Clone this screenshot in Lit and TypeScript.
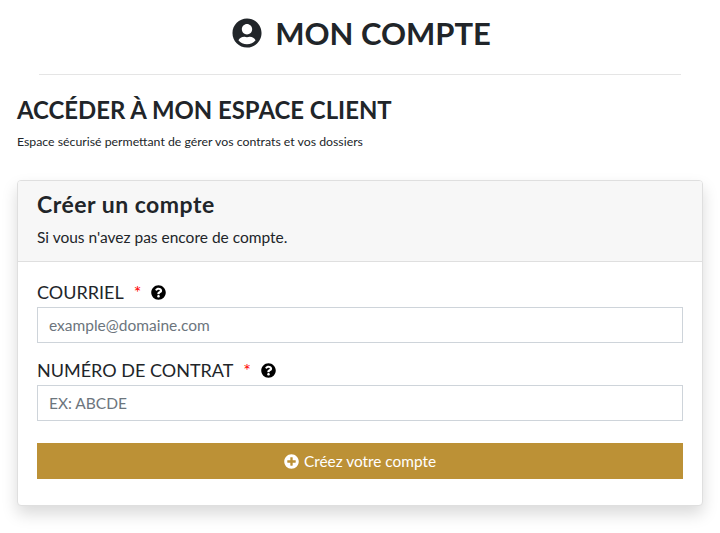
import { html, css, LitElement, svg } from 'lit';
import { customElement } from 'lit/decorators.js';

const userCircle = svg`<path d="M248 8C111 8 0 119 0 256s111 248 248 248 248-111 248-248S385 8 248 8zm0 96c48.6 0 88 39.4 88 88s-39.4 88-88 88-88-39.4-88-88 39.4-88 88-88zm0 344c-58.7 0-111.3-26.6-146.5-68.2 18.8-35.4 55.6-59.8 98.5-59.8 2.4 0 4.8.4 7.1 1.1 13 4.2 26.6 6.9 40.9 6.9 14.3 0 28-2.7 40.9-6.9 2.3-.7 4.7-1.1 7.1-1.1 42.9 0 79.7 24.4 98.5 59.8C359.3 421.4 306.7 448 248 448z"/>`;
const questionCircle = svg`<path d="M504 256c0 136.997-111.043 248-248 248S8 392.997 8 256C8 119.083 119.043 8 256 8s248 111.083 248 248zM262.655 90c-54.497 0-89.255 22.957-116.549 63.758-3.536 5.286-2.353 12.415 2.715 16.258l34.699 26.31c5.205 3.947 12.621 3.008 16.665-2.122 17.864-22.658 30.113-35.797 57.303-35.797 20.429 0 45.698 13.148 45.698 32.958 0 14.976-12.363 22.667-32.534 33.976C247.128 238.528 216 254.941 216 296v4c0 6.627 5.373 12 12 12h56c6.627 0 12-5.373 12-12v-1.333c0-28.462 83.186-29.647 83.186-106.667 0-58.002-60.165-102-116.531-102zM256 338c-25.365 0-46 20.635-46 46 0 25.364 20.635 46 46 46s46-20.636 46-46c0-25.365-20.635-46-46-46z"/>`;
const plusCircle = svg`<path d="M256 8C119 8 8 119 8 256s111 248 248 248 248-111 248-248S393 8 256 8zm144 276c0 6.6-5.4 12-12 12h-92v92c0 6.6-5.4 12-12 12h-56c-6.6 0-12-5.4-12-12v-92h-92c-6.6 0-12-5.4-12-12v-56c0-6.6 5.4-12 12-12h92v-92c0-6.6 5.4-12 12-12h56c6.6 0 12 5.4 12 12v92h92c6.6 0 12 5.4 12 12v56z"/>`;

@customElement('app-root')
export class AppRoot extends LitElement {
  static styles = css`
    :host {
      display: block;
      background: #fff;
      color: #212529;
      font-family: Lato, 'Noto Sans', sans-serif;
      height: 533px;
      overflow: hidden;
    }

    .page {
      padding: 0 17px;
    }

    .page-title {
      display: flex;
      justify-content: center;
      align-items: center;
      gap: 13px;
      margin: 0;
      padding-left: 3px;
      height: 66px;
      font-size: 31px;
      line-height: 64px;
      font-weight: 700;
    }

    .page-title svg {
      width: 30px;
      height: 30px;
      fill: #212529;
    }

    hr {
      margin: 8px 22px 0;
      border: 0;
      border-top: 1px solid #e5e5e5;
    }

    h2 {
      margin: 20px 0 0;
      font-size: 23.9px;
      line-height: 29px;
      font-weight: 700;
    }

    .intro {
      margin: 9px 0 0;
      font-size: 12.3px;
      line-height: 18px;
    }

    .card {
      margin-top: 29px;
      border: 1px solid #dfdfdf;
      border-radius: 4px;
      box-shadow: 0 8px 16px rgba(0, 0, 0, 0.15);
      background: #fff;
    }

    .card-header {
      height: 81px;
      box-sizing: border-box;
      padding: 10px 19px 0;
      background: #f7f7f7;
      border-bottom: 1px solid #dfdfdf;
      border-radius: 3px 3px 0 0;
    }

    h3 {
      margin: 0;
      font-size: 23px;
      letter-spacing: 0.5px;
      line-height: 27px;
      font-weight: 700;
    }

    .card-header p {
      margin: 10px 0 0;
      font-size: 15.5px;
      line-height: 18px;
    }

    .card-body {
      padding: 19px 19px 26px;
    }

    label {
      display: flex;
      align-items: center;
      box-sizing: border-box;
      height: 25px;
      padding-bottom: 3px;
      font-size: 18px;
    }

    .req {
      color: #f00;
      margin-left: 10px;
      font-size: 18px;
    }

    label svg {
      width: 15px;
      height: 15px;
      margin-left: 10px;
      fill: #000;
    }

    input {
      display: block;
      box-sizing: border-box;
      width: 100%;
      height: 36px;
      margin-top: 1px;
      padding: 0 11px;
      border: 1px solid #ced4da;
      border-radius: 0;
      font: 15.5px Lato, 'Noto Sans', sans-serif;
      color: #495057;
      outline: none;
    }

    input::placeholder {
      color: #6c757d;
      opacity: 1;
    }

    .field + .field {
      margin-top: 16px;
    }

    button {
      display: flex;
      justify-content: center;
      align-items: center;
      gap: 5px;
      width: 100%;
      height: 36px;
      margin-top: 22px;
      border: 0;
      background: #bc9136;
      color: #fff;
      font: 15.4px Lato, 'Noto Sans', sans-serif;
    }

    button svg {
      width: 15px;
      height: 15px;
      fill: #fff;
    }
  `;

  render() {
    return html`
      <div class="page">
        <h1 class="page-title">
          <svg viewBox="0 0 496 512">${userCircle}</svg>
          MON COMPTE
        </h1>
        <hr />
        <h2>ACCÉDER À MON ESPACE CLIENT</h2>
        <p class="intro">Espace sécurisé permettant de gérer vos contrats et vos dossiers</p>
        <div class="card">
          <div class="card-header">
            <h3>Créer un compte</h3>
            <p>Si vous n'avez pas encore de compte.</p>
          </div>
          <div class="card-body">
            <div class="field">
              <label>COURRIEL <span class="req">*</span><svg viewBox="0 0 512 512">${questionCircle}</svg></label>
              <input type="text" placeholder="example@domaine.com" />
            </div>
            <div class="field">
              <label>NUMÉRO DE CONTRAT <span class="req">*</span><svg viewBox="0 0 512 512">${questionCircle}</svg></label>
              <input type="text" placeholder="EX: ABCDE" />
            </div>
            <button type="button"><svg viewBox="0 0 512 512">${plusCircle}</svg>Créez votre compte</button>
          </div>
        </div>
      </div>
    `;
  }
}
